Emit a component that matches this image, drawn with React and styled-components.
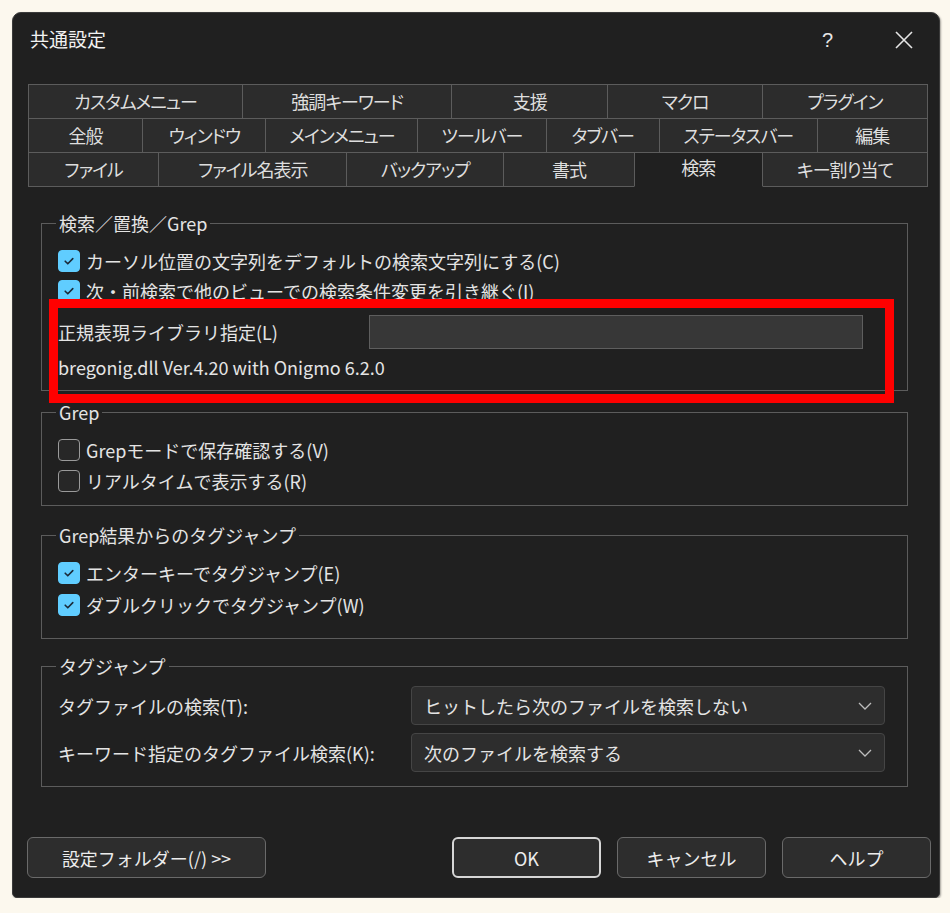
import React from 'react';
import styled, { createGlobalStyle } from 'styled-components';

const GlobalStyle = createGlobalStyle`
  html, body {
    margin: 0;
    padding: 0;
    background: #fcf8ee;
  }
  * {
    box-sizing: border-box;
  }
`;

const font = `"Noto Sans CJK JP", "Noto Sans", sans-serif`;

const Page = styled.div`
  padding: 12px 0 0 12px;
  font-family: ${font};
  color: #e4e4e4;
`;

const Window = styled.div`
  position: relative;
  width: 928px;
  height: 886px;
  background: #202020;
  border: 1px solid #3b3b3b;
  border-radius: 9px 9px 5px 5px;
  box-shadow: 1px 1px 2px rgba(0, 0, 0, 0.35);
  display: flex;
  flex-direction: column;
`;

const TitleBar = styled.div`
  height: 54px;
  display: flex;
  align-items: center;
  padding: 0 26px 0 17px;
`;

const Title = styled.div`
  flex: 1;
  font-size: 19px;
  color: #f2f2f2;
  margin-top: -3px;
`;

const HelpGlyph = styled.span`
  font-family: "Liberation Sans", sans-serif;
  font-size: 20px;
  color: #e6e6e6;
  margin-right: 62px;
`;

const Tabs = styled.div`
  margin: 17px 11px 0 16px;
  display: flex;
  flex-direction: column;
`;

const TabRow = styled.div`
  display: flex;
  height: 35px;
  margin-top: ${p => (p.$first ? '0' : '-1px')};
`;

const Tab = styled.div`
  flex: ${p => p.$w} 1 0;
  margin-left: -1px;
  border: 1px solid #5c5c5c;
  border-bottom-color: ${p => (p.$active ? '#202020' : '#5c5c5c')};
  background: ${p => (p.$active ? '#202020' : '#2c2c2c')};
  display: flex;
  align-items: center;
  justify-content: center;
  font-size: 18px;
  letter-spacing: -1px;
  font-feature-settings: "palt";
  color: #dedede;
  padding-bottom: ${p => (p.$active ? '6px' : '1px')};
  position: relative;
  z-index: ${p => (p.$active ? 1 : 0)};
`;

const Content = styled.div`
  padding: 0 31px 0 28px;
  display: flex;
  flex-direction: column;
`;

const GroupBox = styled.div`
  margin-top: ${p => p.$top}px;
  border: 1px solid #5c5c5c;
  padding: 0 16px ${p => p.$pb}px 16px;
  display: flex;
  flex-direction: column;
`;

const Legend = styled.span`
  align-self: flex-start;
  margin: -13px 0 0 -2px;
  padding: 0 3px;
  height: 24px;
  line-height: 24px;
  font-size: 18px;
  background: #202020;
`;

const Body = styled.div`
  padding-top: ${p => p.$pt}px;
  display: flex;
  flex-direction: column;
  gap: ${p => p.$gap || 0}px;
`;

const CheckRow = styled.label`
  height: ${p => p.$h}px;
  display: flex;
  align-items: center;
  font-size: 18px;
`;

const Box = styled.span`
  width: 22px;
  height: 22px;
  border-radius: 4px;
  margin-right: 6px;
  flex-shrink: 0;
  display: flex;
  align-items: center;
  justify-content: center;
  background: ${p => (p.$checked ? '#60cdff' : '#272727')};
  border: 1px solid ${p => (p.$checked ? '#60cdff' : '#9a9a9a')};
`;

const FieldRow = styled.div`
  margin-top: 8px;
  height: 36px;
  display: flex;
  align-items: center;
  font-size: 18px;
`;

const FieldLabel = styled.span`
  width: ${p => p.$w}px;
  flex-shrink: 0;
  font-size: 18px;
`;

const TextBox = styled.div`
  width: 494px;
  height: 34px;
  background: #373737;
  border: 1px solid #5e5e5e;
`;

const InfoRow = styled.div`
  margin-top: 4px;
  height: 26px;
  line-height: 26px;
  font-size: 18px;
`;

const SelectRow = styled.div`
  height: 39px;
  display: flex;
  align-items: center;
`;

const Select = styled.div`
  width: 474px;
  height: 39px;
  border-radius: 4px;
  background: #2d2d2d;
  border: 1px solid #454545;
  display: flex;
  align-items: center;
  justify-content: space-between;
  padding: 0 12px 0 12px;
  font-size: 18px;
`;

const ButtonBar = styled.div`
  margin-top: 50px;
  padding: 0 8px 0 14px;
  display: flex;
  align-items: center;
`;

const Spacer = styled.div`
  flex: 1;
`;

const Button = styled.button`
  width: ${p => p.$w}px;
  height: 41px;
  margin-left: ${p => p.$ml || 0}px;
  border-radius: 6px;
  background: #2d2d2d;
  border: ${p => (p.$primary ? '2px solid #d6d6d6' : '1px solid #6a6a6a')};
  color: #ececec;
  font-family: ${font};
  font-size: 18px;
  padding: 0;
`;

const RedMark = styled.div`
  position: absolute;
  left: 36px;
  top: 286px;
  width: 845px;
  height: 104px;
  border: 9px solid #ff0000;
  pointer-events: none;
`;

const tabRows = [
  [['カスタムメニュー', 214], ['強調キーワード', 209], ['支援', 156], ['マクロ', 154], ['プラグイン', 165]],
  [['全般', 114], ['ウィンドウ', 123], ['メインメニュー', 152], ['ツールバー', 128], ['タブバー', 113], ['ステータスバー', 158], ['編集', 110]],
  [['ファイル', 130], ['ファイル名表示', 188], ['バックアップ', 157], ['書式', 130], ['検索', 128, true], ['キー割り当て', 165]],
];

const CheckMark = () => (
  <svg width="14" height="14" viewBox="0 0 14 14">
    <path d="M3.2 7.2 L5.8 9.8 L10.8 4.6" fill="none" stroke="#1b2a38" strokeWidth="1.6" strokeLinecap="round" strokeLinejoin="round" />
  </svg>
);

const Check = ({ checked, h, children }) => (
  <CheckRow $h={h}>
    <Box $checked={checked}>{checked && <CheckMark />}</Box>
    {children}
  </CheckRow>
);

const Chevron = () => (
  <svg width="14" height="8" viewBox="0 0 14 8">
    <path d="M1 1 L7 7 L13 1" fill="none" stroke="#bdbdbd" strokeWidth="1.3" />
  </svg>
);

const CloseIcon = () => (
  <svg width="18" height="18" viewBox="0 0 18 18">
    <path d="M1 1 L17 17 M17 1 L1 17" stroke="#e6e6e6" strokeWidth="1.6" />
  </svg>
);

const App = () => {
  return (
    <Page>
      <GlobalStyle />
      <Window>
        <TitleBar>
          <Title>共通設定</Title>
          <HelpGlyph>?</HelpGlyph>
          <CloseIcon />
        </TitleBar>

        <Tabs>
          {tabRows.map((row, i) => (
            <TabRow key={i} $first={i === 0}>
              {row.map(([label, w, active]) => (
                <Tab key={label} $w={w} $active={active}>{label}</Tab>
              ))}
            </TabRow>
          ))}
        </Tabs>

        <Content>
          <GroupBox $top={36} $pb={10}>
            <Legend>検索／置換／Grep</Legend>
            <Body $pt={11}>
              <Check checked h={30}>カーソル位置の文字列をデフォルトの検索文字列にする(C)</Check>
              <Check checked h={30}>次・前検索で他のビューでの検索条件変更を引き継ぐ(I)</Check>
              <FieldRow>
                <FieldLabel $w={311}>正規表現ライブラリ指定(L)</FieldLabel>
                <TextBox />
              </FieldRow>
              <InfoRow>bregonig.dll Ver.4.20 with Onigmo 6.2.0</InfoRow>
            </Body>
          </GroupBox>

          <GroupBox $top={21} $pb={9}>
            <Legend>Grep</Legend>
            <Body $pt={10}>
              <Check h={31}>Grepモードで保存確認する(V)</Check>
              <Check h={31}>リアルタイムで表示する(R)</Check>
            </Body>
          </GroupBox>

          <GroupBox $top={29} $pb={17}>
            <Legend>Grep結果からのタグジャンプ</Legend>
            <Body $pt={10}>
              <Check checked h={32}>エンターキーでタグジャンプ(E)</Check>
              <Check checked h={32}>ダブルクリックでタグジャンプ(W)</Check>
            </Body>
          </GroupBox>

          <GroupBox $top={27} $pb={14}>
            <Legend>タグジャンプ</Legend>
            <Body $pt={8} $gap={8}>
              <SelectRow>
                <FieldLabel $w={353}>タグファイルの検索(T):</FieldLabel>
                <Select>
                  <span>ヒットしたら次のファイルを検索しない</span>
                  <Chevron />
                </Select>
              </SelectRow>
              <SelectRow>
                <FieldLabel $w={353}>キーワード指定のタグファイル検索(K):</FieldLabel>
                <Select>
                  <span>次のファイルを検索する</span>
                  <Chevron />
                </Select>
              </SelectRow>
            </Body>
          </GroupBox>
        </Content>

        <ButtonBar>
          <Button $w={239}>設定フォルダー(/) &gt;&gt;</Button>
          <Spacer />
          <Button $w={149} $primary>OK</Button>
          <Button $w={149} $ml={16}>キャンセル</Button>
          <Button $w={149} $ml={16}>ヘルプ</Button>
        </ButtonBar>

        <RedMark />
      </Window>
    </Page>
  );
};

export default App;
